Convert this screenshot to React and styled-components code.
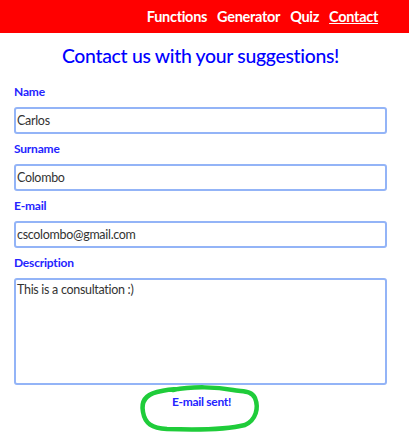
import React from "react";
import styled, { createGlobalStyle } from "styled-components";

const Global = createGlobalStyle`
  html, body { margin: 0; padding: 0; background: #fff; }
  body { font-family: "Lato", "Open Sans", sans-serif; }
`;

const Header = styled.header`
  height: 33px;
  background: #ff0000;
  display: flex;
  align-items: center;
  justify-content: flex-end;
  padding-right: 31px;
  gap: 10px;
`;

const NavLink = styled.a`
  color: #fff;
  font-weight: 700;
  font-size: 14.5px;
  letter-spacing: -0.3px;
  text-decoration: ${(p) => (p.$active ? "underline" : "none")};
  cursor: pointer;
`;

const Main = styled.main`
  padding: 9px 22px 48px 14px;
`;

const Title = styled.h1`
  margin: 0 0 14px;
  text-align: center;
  color: #0000ff;
  font-size: 19.4px;
  letter-spacing: -0.3px;
  font-weight: 500;
  line-height: 28px;
`;

const Form = styled.form`
  display: flex;
  flex-direction: column;
`;

const Label = styled.label`
  display: block;
  color: #2424ff;
  font-size: 12px;
  letter-spacing: -0.2px;
  font-weight: 700;
  line-height: 16px;
  margin-bottom: 7px;
`;

const Field = styled.div`
  display: flex;
  flex-direction: column;
  margin-bottom: 7px;
`;

const boxStyle = `
  box-sizing: border-box;
  width: 100%;
  border: 2px solid #93b4f7;
  border-radius: 3px;
  font-family: inherit;
  font-size: 12.5px;
  letter-spacing: -0.3px;
  color: #333;
  padding: 0 1px;
  outline: none;
  background: #fff;
`;

const Input = styled.input`
  ${boxStyle}
  height: 27px;
`;

const TextArea = styled.textarea`
  ${boxStyle}
  height: 107px;
  resize: none;
  padding-top: 1px;
  line-height: 17px;
`;

const SentWrap = styled.div`
  position: relative;
  align-self: center;
  margin-top: 2px;
  margin-left: 2px;
`;

const Sent = styled.p`
  margin: 0;
  color: #2424ff;
  font-size: 12px;
  letter-spacing: -0.3px;
  font-weight: 700;
  line-height: 16px;
`;

const Scribble = styled.svg`
  position: absolute;
  left: -35px;
  top: -10px;
  pointer-events: none;
`;

export default function App() {
  return (
    <>
      <Global />
      <Header>
        <NavLink>Functions</NavLink>
        <NavLink>Generator</NavLink>
        <NavLink>Quiz</NavLink>
        <NavLink $active>Contact</NavLink>
      </Header>
      <Main>
        <Title>Contact us with your suggestions!</Title>
        <Form>
          <Label>Name</Label>
          <Field>
            <Input defaultValue="Carlos" />
          </Field>
          <Label>Surname</Label>
          <Field>
            <Input defaultValue="Colombo" />
          </Field>
          <Label>E-mail</Label>
          <Field>
            <Input defaultValue="cscolombo@gmail.com" />
          </Field>
          <Label>Description</Label>
          <Field>
            <TextArea defaultValue="This is a consultation :)" />
          </Field>
          <SentWrap>
            <Sent>E-mail sent!</Sent>
            <Scribble width="126" height="50" viewBox="0 0 126 50">
              <path
                d="M36 6 C56 2 80 3 96 6 C106 8 114 6 118 14 C122 24 119 36 108 41 C88 46 58 46 30 45 C15 44 8 40 6 28 C4 18 8 11 20 8 C28 6 34 5 42 5"
                fill="none"
                stroke="#1fcc3a"
                strokeWidth="4.5"
                strokeLinecap="round"
                strokeLinejoin="round"
              />
            </Scribble>
          </SentWrap>
        </Form>
      </Main>
    </>
  );
}
